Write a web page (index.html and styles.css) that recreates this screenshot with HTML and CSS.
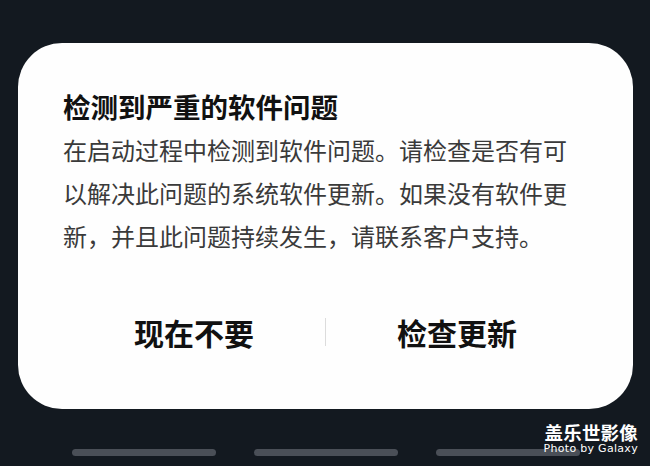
FILE: index.html
```html
<!DOCTYPE html>
<html lang="zh-CN">
<head>
<meta charset="utf-8">
<link rel="stylesheet" href="styles.css">
</head>
<body>
<div class="screen">
  <div class="dialog">
    <h1 class="title">检测到严重的软件问题</h1>
    <p class="message">在启动过程中检测到软件问题。请检查是否有可以解决此问题的系统软件更新。如果没有软件更新，并且此问题持续发生，请联系客户支持。</p>
    <div class="actions">
      <div class="action">现在不要</div>
      <div class="divider"></div>
      <div class="action">检查更新</div>
    </div>
  </div>
  <div class="navbar">
    <span class="navpill"></span>
    <span class="navpill"></span>
    <span class="navpill"></span>
  </div>
  <div class="watermark">
    <div class="wm-cn">盖乐世影像</div>
    <div class="wm-en">Photo by Galaxy</div>
  </div>
</div>
</body>
</html>
```
FILE: styles.css
```css
html, body {
  margin: 0;
  padding: 0;
  background: #131920;
}
.screen {
  position: relative;
  width: 650px;
  height: 466px;
  box-sizing: border-box;
  padding: 43px 17px 0 18px;
  font-family: "Noto Sans CJK SC", "Noto Sans", sans-serif;
  overflow: hidden;
}
.dialog {
  background: #fefefe;
  border-radius: 44px;
  padding: 45px;
  box-sizing: border-box;
  width: 615px;
  height: 366px;
}
.title {
  margin: 0;
  font-size: 27.5px;
  line-height: 36px;
  font-weight: 700;
  color: #111;
}
.message {
  margin: 4px 0 0 0;
  font-size: 24px;
  line-height: 43px;
  color: #3a3a3a;
  font-weight: 400;
}
.actions {
  margin-top: 47px;
  display: flex;
  align-items: center;
  height: 56px;
}
.action {
  flex: 1;
  text-align: center;
  font-size: 30px;
  font-weight: 700;
  color: #111;
  line-height: 56px;
}
.divider {
  width: 1px;
  height: 28px;
  background: #dcdcdc;
}
.navbar {
  display: flex;
  justify-content: center;
  gap: 38px;
  margin-top: 40px;
}
.navpill {
  width: 144px;
  height: 7px;
  border-radius: 4px;
  background: #4a4f57;
}
.watermark {
  position: absolute;
  right: 12px;
  bottom: 11px;
  color: #fff;
  display: flex;
  flex-direction: column;
  align-items: flex-end;
}
.wm-cn {
  font-size: 18.5px;
  line-height: 18px;
  font-weight: 700;
  letter-spacing: 0.2px;
}
.wm-en {
  margin-top: 2px;
  font-family: "DejaVu Sans", sans-serif;
  font-size: 11px;
  line-height: 12px;
  letter-spacing: 0.3px;
}
```
